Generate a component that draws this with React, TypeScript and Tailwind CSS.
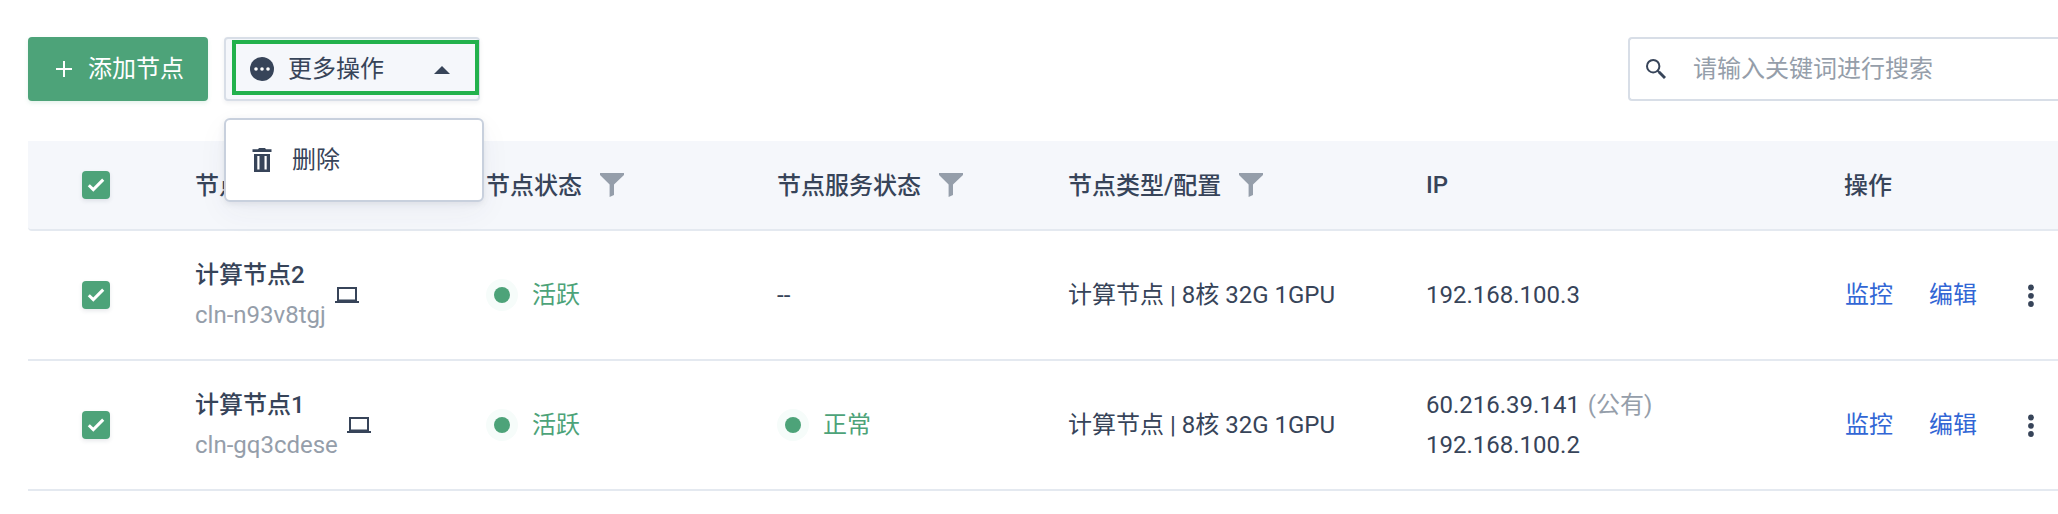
import type { ReactNode } from "react";

function Checkbox() {
  return (
    <span className="flex size-7 items-center justify-center rounded-[4px] bg-[#4da379] shadow-[0_2px_4px_rgba(54,67,92,0.12)]">
      <svg className="size-7" viewBox="0 0 28 28" fill="none" stroke="white" strokeWidth="3">
        <path d="M6.8 14.2 11.3 18.6 21.2 8.6" />
      </svg>
    </span>
  );
}

function Funnel() {
  return (
    <svg className="h-6 w-6" viewBox="0 0 24 24" fill="#959eaa">
      <path d="M0 0H24V2L14 11.6V22L9.6 24V11.6L0 2Z" />
    </svg>
  );
}

function Laptop() {
  return (
    <svg className="h-4 w-6" viewBox="0 0 24 16" fill="#374459">
      <path fillRule="evenodd" d="M2 0H22V14H24V16H0V14H2ZM4 2V12.4H20V2Z" />
    </svg>
  );
}

function Status({ children }: { children: ReactNode }) {
  return (
    <div className="flex items-center gap-[14px] text-[#4da379]">
      <span className="flex size-8 items-center justify-center rounded-full bg-[#f6fcfa]">
        <span className="size-4 rounded-full bg-[#4da379]" />
      </span>
      {children}
    </div>
  );
}

function Heading({ children }: { children: ReactNode }) {
  return (
    <div className="flex items-center gap-[18px]">
      <span className="pt-px">{children}</span>
      <Funnel />
    </div>
  );
}

const columns =
  "grid grid-cols-[167px_291px_291px_291px_358px_418px_1fr] items-center";

interface NodeRow {
  name: string;
  id: string;
  service?: string;
  publicIp?: string;
  ip: string;
}

const nodes: NodeRow[] = [
  { name: "计算节点2", id: "cln-n93v8tgj", ip: "192.168.100.3" },
  { name: "计算节点1", id: "cln-gq3cdese", service: "正常", publicIp: "60.216.39.141", ip: "192.168.100.2" },
];

function Row({ node }: { node: NodeRow }) {
  return (
    <div className={`${columns} h-[130px] border-b-2 border-[#e4e9f0]`}>
      <div className="pl-[54px]">
        <Checkbox />
      </div>
      <div className="flex items-center gap-[9px]">
        <div className="leading-10">
          <div className="font-medium">{node.name}</div>
          <div className="text-[#959eaa]">{node.id}</div>
        </div>
        <Laptop />
      </div>
      <Status>活跃</Status>
      <div>{node.service ? <Status>{node.service}</Status> : "--"}</div>
      <div>计算节点 | 8核 32G 1GPU</div>
      <div className="leading-10">
        {node.publicIp && (
          <div>
            {node.publicIp} <span className="ml-0.5 text-[#959eaa]">(公有)</span>
          </div>
        )}
        <div>{node.ip}</div>
      </div>
      <div className="flex items-center pl-px text-[#3266d5]">
        <span>监控</span>
        <span className="ml-9">编辑</span>
        <svg className="ml-[50px] h-6 w-2" viewBox="0 0 8 24" fill="#374459">
          <circle cx="4" cy="4.5" r="2.9" />
          <circle cx="4" cy="12.8" r="2.9" />
          <circle cx="4" cy="21" r="2.9" />
        </svg>
      </div>
    </div>
  );
}

export default function App() {
  return (
    <div className="h-[514px] w-[2058px] overflow-hidden bg-white pt-[37px] pl-7 font-[Roboto,'Noto_Sans_CJK_SC',sans-serif] text-[24px] leading-10 whitespace-nowrap text-[#374459]">
      <div className="flex h-16">
        <button className="flex w-[180px] items-center rounded-[4px] bg-[#4da379] pl-7 text-white shadow-[0_2px_4px_rgba(77,163,121,0.15)]">
          <svg className="size-4" viewBox="0 0 16 16" fill="white">
            <path d="M7 0H9V7H16V9H9V16H7V9H0V7H7Z" />
          </svg>
          <span className="ml-4">添加节点</span>
        </button>

        <div className="relative ml-4 w-64">
          <button className="flex h-16 w-full items-center rounded-[4px] border-2 border-[#d8dee7] bg-[#f5f7fb] pl-6 shadow-[0_2px_4px_rgba(54,67,92,0.08)]">
            <svg className="size-6" viewBox="0 0 24 24">
              <circle cx="12" cy="12" r="12" fill="#374459" />
              <circle cx="6" cy="12" r="1.8" fill="white" />
              <circle cx="12" cy="12" r="1.8" fill="white" />
              <circle cx="18" cy="12" r="1.8" fill="white" />
            </svg>
            <span className="ml-[14px]">更多操作</span>
            <svg className="mt-[2px] ml-[50px] h-2 w-4" viewBox="0 0 16 8" fill="#374459">
              <path d="M0 8 8 0 16 8Z" />
            </svg>
          </button>
          <div className="absolute top-[3px] left-2 h-[55px] w-[247px] border-4 border-[#22b14c]" />
          <div className="absolute top-[81px] left-0 flex h-[84px] w-[260px] items-center rounded-[6px] border-2 border-[#c8d0dd] bg-white pl-[26px] shadow-[0_2px_6px_rgba(54,67,92,0.1),0_10px_30px_rgba(54,67,92,0.05)]">
            <svg className="h-6 w-5" viewBox="0 0 20 24" fill="#374459">
              <path d="M7 0H13L14 1.2H19.5V4H0.5V1.2H6Z" />
              <path fillRule="evenodd" d="M2 6H18V24H2ZM5.3 8V21.5H7.5V8ZM12.5 8V21.5H14.7V8Z" />
            </svg>
            <span className="ml-5">删除</span>
          </div>
        </div>

        <div className="ml-[1148px] flex flex-1 items-center rounded-l-[4px] border-2 border-r-0 border-[#d8dee7] bg-white pl-4">
          <svg className="size-5" viewBox="0 0 20 20" fill="none" stroke="#374459">
            <circle cx="7.2" cy="7.2" r="6.2" strokeWidth="2" />
            <path d="M11.5 11.5 13 13" strokeWidth="2" />
            <path d="M12.8 12.8 19 19" strokeWidth="2.9" />
          </svg>
          <span className="ml-[27px] text-[#959eaa]">请输入关键词进行搜索</span>
        </div>
      </div>

      <div className="mt-10">
        <div className={`${columns} h-[90px] rounded-bl-[4px] border-b-2 border-[#e4e9f0] bg-[#f5f7fb] font-medium`}>
          <div className="pl-[54px]">
            <Checkbox />
          </div>
          <div className="pt-px">节点</div>
          <Heading>节点状态</Heading>
          <Heading>节点服务状态</Heading>
          <Heading>节点类型/配置</Heading>
          <div>IP</div>
          <div className="pt-px">操作</div>
        </div>
        {nodes.map((node) => (
          <Row key={node.id} node={node} />
        ))}
      </div>
    </div>
  );
}
